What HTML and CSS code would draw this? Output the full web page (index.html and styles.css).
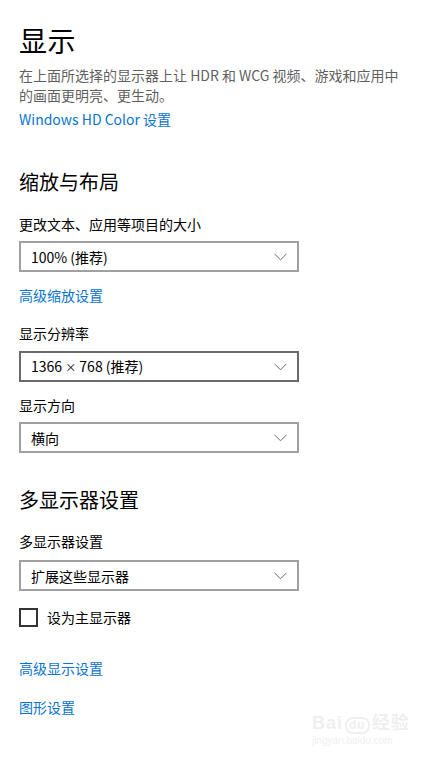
FILE: index.html
```html
<!DOCTYPE html>
<html lang="zh-CN">
<head>
<meta charset="utf-8">
<title>显示</title>
<link rel="stylesheet" href="styles.css">
</head>
<body>
<main class="page">
  <h1 class="title">显示</h1>
  <p class="desc">在上面所选择的显示器上让 HDR 和 WCG 视频、游戏和应用中<br>的画面更明亮、更生动。</p>
  <a class="link link-hd">Windows HD Color 设置</a>

  <h2 class="heading h-scale">缩放与布局</h2>
  <div class="label l1">更改文本、应用等项目的大小</div>
  <div class="select s1"><span>100% (推荐)</span><svg class="chev" width="13" height="8" viewBox="0 0 13 8"><path d="M0.5 0.8 L6.5 6.8 L12.5 0.8" fill="none" stroke="#6b6b6b" stroke-width="1"/></svg></div>
  <a class="link link-scale">高级缩放设置</a>

  <div class="label l2">显示分辨率</div>
  <div class="select s2 dark"><span>1366 <span class="times">×</span> 768 (推荐)</span><svg class="chev" width="13" height="8" viewBox="0 0 13 8"><path d="M0.5 0.8 L6.5 6.8 L12.5 0.8" fill="none" stroke="#6b6b6b" stroke-width="1"/></svg></div>

  <div class="label l3">显示方向</div>
  <div class="select s3"><span>横向</span><svg class="chev" width="13" height="8" viewBox="0 0 13 8"><path d="M0.5 0.8 L6.5 6.8 L12.5 0.8" fill="none" stroke="#6b6b6b" stroke-width="1"/></svg></div>

  <h2 class="heading h-multi">多显示器设置</h2>
  <div class="label l4">多显示器设置</div>
  <div class="select s4"><span>扩展这些显示器</span><svg class="chev" width="13" height="8" viewBox="0 0 13 8"><path d="M0.5 0.8 L6.5 6.8 L12.5 0.8" fill="none" stroke="#6b6b6b" stroke-width="1"/></svg></div>

  <label class="check"><span class="box"></span><span class="check-text">设为主显示器</span></label>

  <a class="link link-adv">高级显示设置</a>
  <a class="link link-gfx">图形设置</a>

  <div class="watermark">
    <div class="wm-top">Bai<span class="wm-du">du</span>经验</div>
    <div class="wm-bottom">jingyan.baidu.com</div>
  </div>
</main>
</body>
</html>
```

FILE: styles.css
```css
* { box-sizing: border-box; }
html, body {
  margin: 0;
  padding: 0;
  background: #ffffff;
}
body {
  font-family: "Noto Sans CJK SC", "Noto Sans", "Liberation Sans", sans-serif;
  color: #000000;
  width: 430px;
  height: 758px;
  overflow: hidden;
}
.page {
  position: relative;
  padding: 20px 0 0 19px;
  display: flex;
  flex-direction: column;
  align-items: flex-start;
  height: 758px;
}
.title {
  margin: 0;
  font-size: 28px;
  font-weight: 400;
  line-height: 40px;
  letter-spacing: 0.5px;
}
.desc {
  margin: 5px 0 0 0;
  width: 410px;
  font-size: 14px;
  line-height: 20px;
  color: #5f5f5f;
  white-space: nowrap;
}
.link {
  display: block;
  font-size: 14px;
  line-height: 20px;
  color: #0a74d0;
  cursor: pointer;
}
.link-hd { margin-top: 4px; }
.heading {
  margin: 0;
  font-size: 20px;
  font-weight: 400;
  line-height: 30px;
}
.h-scale { margin-top: 38px; }
.h-multi { margin-top: 32px; }
.label {
  font-size: 14px;
  line-height: 20px;
  color: #000;
}
.l1 { margin-top: 17px; }
.l2 { margin-top: 18px; }
.l3 { margin-top: 13px; }
.l4 { margin-top: 16px; }
.select {
  width: 280px;
  height: 31px;
  border: 2px solid #a0a0a0;
  display: flex;
  align-items: center;
  justify-content: space-between;
  padding: 0 10px 0 10px;
  font-size: 14px;
  color: #000;
}
.select.dark { border-color: #6a6a6a; }
.select span { line-height: 20px; }
.times { font-size: 11px; }
.chev { display: block; margin-top: 1px; }
.s1 { margin-top: 7px; }
.s2 { margin-top: 8px; }
.s3 { margin-top: 7px; }
.s4 { margin-top: 9px; }
.link-scale { margin-top: 13px; }
.check {
  margin-top: 16px;
  display: flex;
  align-items: center;
  gap: 9px;
  height: 20px;
}
.box {
  width: 19px;
  height: 19px;
  border: 2px solid #333333;
  display: block;
}
.check-text {
  font-size: 14px;
  line-height: 20px;
}
.link-adv { margin-top: 31px; }
.link-gfx { margin-top: 19px; }
.watermark {
  position: absolute;
  left: 312px;
  top: 712px;
  color: #efefef;
  font-family: "Liberation Sans", "Noto Sans CJK SC", sans-serif;
  font-weight: 700;
}
.wm-top {
  font-size: 18px;
  line-height: 22px;
  letter-spacing: 1px;
}
.wm-du {
  display: inline-block;
  border: 2px solid #efefef;
  border-radius: 8px;
  font-size: 12px;
  line-height: 13px;
  padding: 0 2px;
  margin: 0 2px;
}
.wm-bottom {
  font-size: 10px;
  line-height: 14px;
  font-weight: 400;
}
```
